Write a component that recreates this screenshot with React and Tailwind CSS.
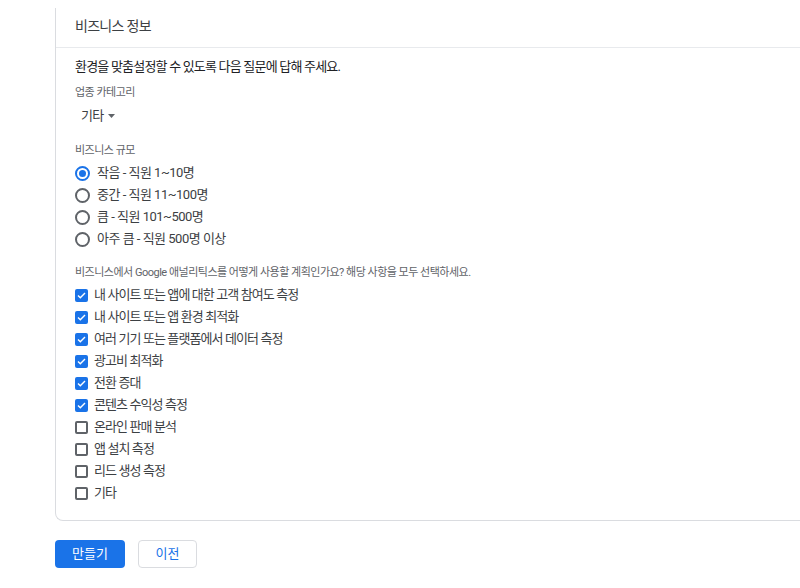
import React, { useState } from "react";

const sizes = [
  "작음 - 직원 1~10명",
  "중간 - 직원 11~100명",
  "큼 - 직원 101~500명",
  "아주 큼 - 직원 500명 이상",
];

const uses = [
  ["내 사이트 또는 앱에 대한 고객 참여도 측정", true],
  ["내 사이트 또는 앱 환경 최적화", true],
  ["여러 기기 또는 플랫폼에서 데이터 측정", true],
  ["광고비 최적화", true],
  ["전환 증대", true],
  ["콘텐츠 수익성 측정", true],
  ["온라인 판매 분석", false],
  ["앱 설치 측정", false],
  ["리드 생성 측정", false],
  ["기타", false],
];

const Radio = ({ on }) => (
  <span
    className={`w-[15px] h-[15px] rounded-full border-2 flex items-center justify-center ${
      on ? "border-[#1a73e8]" : "border-[#5f6368]"
    }`}
  >
    {on && <span className="w-[7px] h-[7px] rounded-full bg-[#1a73e8]"></span>}
  </span>
);

const Check = ({ on }) =>
  on ? (
    <span className="w-[13px] h-[13px] rounded-[2px] bg-[#1a73e8] flex items-center justify-center">
      <svg width="9" height="7" viewBox="0 0 9 7" fill="none">
        <path d="M1 3.6 L3.3 5.8 L8 1" stroke="white" strokeWidth="1.4" />
      </svg>
    </span>
  ) : (
    <span className="w-[13px] h-[13px] rounded-[2px] border-2 border-[#5f6368]"></span>
  );

export default function App() {
  const [size, setSize] = useState(0);
  const [checked, setChecked] = useState(uses.map((u) => u[1]));

  return (
    <div
      className="w-[800px] h-[588px] bg-white overflow-hidden"
      style={{ fontFamily: 'Roboto, "Noto Sans CJK KR", sans-serif' }}
    >
      {/* CARD */}
      <div className="ml-[55px] mt-2 w-[760px] border-l border-b border-[#dadce0] rounded-bl-lg">
        {/* HEADER */}
        <div className="h-[40px] border-b border-[#e8eaed] pl-[19px] pt-[6px]">
          <span className="text-[14px] leading-[18px] tracking-[-0.7px] text-[#3c4043]">비즈니스 정보</span>
        </div>
        {/* BODY */}
        <div className="pl-[19px] pt-[9px] pb-[16px]">
          <div className="text-[13px] leading-[20px] tracking-[-0.8px] text-[#202124]">
            환경을 맞춤설정할 수 있도록 다음 질문에 답해 주세요.
          </div>
          <div className="mt-[8px] text-[11px] leading-[16px] tracking-[-0.5px] text-[#5f6368]">업종 카테고리</div>
          <div className="mt-[5px] ml-[6px] h-[20px] flex items-center gap-[5px] text-[13px] tracking-[-0.8px] text-[#3c4043]">
            <span>기타</span>
            <svg width="7" height="4" viewBox="0 0 7 4">
              <path d="M0 0 L7 0 L3.5 4 Z" fill="#5f6368" />
            </svg>
          </div>
          <div className="mt-[17px] text-[11px] leading-[16px] tracking-[-0.5px] text-[#5f6368]">비즈니스 규모</div>
          <div className="mt-[3px] flex flex-col">
            {sizes.map((s, i) => (
              <div
                key={s}
                onClick={() => setSize(i)}
                className="h-[22px] flex items-center gap-[7px] text-[13px] tracking-[-0.5px] text-[#3c4043] cursor-pointer"
              >
                <Radio on={size === i} />
                <span>{s}</span>
              </div>
            ))}
          </div>
          <div className="mt-[15px] text-[11px] leading-[16px] tracking-[-0.5px] text-[#5f6368]">
            비즈니스에서 Google 애널리틱스를 어떻게 사용할 계획인가요? 해당 사항을 모두 선택하세요.
          </div>
          <div className="mt-[3px] flex flex-col">
            {uses.map((u, i) => (
              <div
                key={u[0]}
                onClick={() => setChecked(checked.map((c, j) => (j === i ? !c : c)))}
                className="h-[22px] flex items-center gap-[6px] text-[13px] tracking-[-0.9px] text-[#3c4043] cursor-pointer"
              >
                <Check on={checked[i]} />
                <span>{u[0]}</span>
              </div>
            ))}
          </div>
        </div>
      </div>
      {/* BUTTONS */}
      <div className="ml-[55px] mt-[19px] flex gap-[13px]">
        <button className="w-[70px] h-[28px] rounded bg-[#1a73e8] text-white text-[13px]">만들기</button>
        <button className="w-[59px] h-[28px] rounded border border-[#dadce0] bg-white text-[#1a73e8] text-[13px]">
          이전
        </button>
      </div>
    </div>
  );
}
